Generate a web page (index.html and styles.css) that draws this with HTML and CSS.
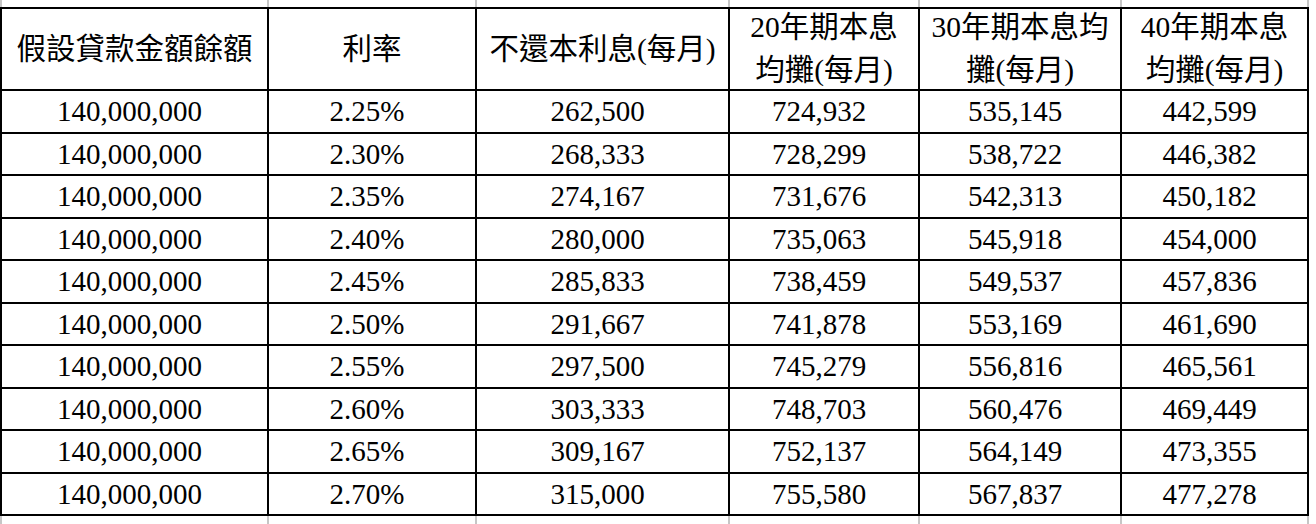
FILE: index.html
```html
<!DOCTYPE html>
<html lang="zh-Hant">
<head>
<meta charset="utf-8">
<title>房貸試算</title>
<link rel="stylesheet" href="styles.css">
</head>
<body>
<div class="sheet">
  <div class="strip strip-top">
    <span></span><span></span><span></span><span></span><span></span><span></span>
  </div>
  <div class="loan-table" role="table">
    <div class="th" role="columnheader">假設貸款金額餘額</div>
    <div class="th" role="columnheader">利率</div>
    <div class="th" role="columnheader">不還本利息(每月)</div>
    <div class="th" role="columnheader">20年期本息<br>均攤(每月)</div>
    <div class="th" role="columnheader">30年期本息均<br>攤(每月)</div>
    <div class="th" role="columnheader">40年期本息<br>均攤(每月)</div>

    <div class="td">140,000,000</div><div class="td">2.25%</div><div class="td">262,500</div><div class="td">724,932</div><div class="td">535,145</div><div class="td">442,599</div>
    <div class="td">140,000,000</div><div class="td">2.30%</div><div class="td">268,333</div><div class="td">728,299</div><div class="td">538,722</div><div class="td">446,382</div>
    <div class="td">140,000,000</div><div class="td">2.35%</div><div class="td">274,167</div><div class="td">731,676</div><div class="td">542,313</div><div class="td">450,182</div>
    <div class="td">140,000,000</div><div class="td">2.40%</div><div class="td">280,000</div><div class="td">735,063</div><div class="td">545,918</div><div class="td">454,000</div>
    <div class="td">140,000,000</div><div class="td">2.45%</div><div class="td">285,833</div><div class="td">738,459</div><div class="td">549,537</div><div class="td">457,836</div>
    <div class="td">140,000,000</div><div class="td">2.50%</div><div class="td">291,667</div><div class="td">741,878</div><div class="td">553,169</div><div class="td">461,690</div>
    <div class="td">140,000,000</div><div class="td">2.55%</div><div class="td">297,500</div><div class="td">745,279</div><div class="td">556,816</div><div class="td">465,561</div>
    <div class="td">140,000,000</div><div class="td">2.60%</div><div class="td">303,333</div><div class="td">748,703</div><div class="td">560,476</div><div class="td">469,449</div>
    <div class="td">140,000,000</div><div class="td">2.65%</div><div class="td">309,167</div><div class="td">752,137</div><div class="td">564,149</div><div class="td">473,355</div>
    <div class="td">140,000,000</div><div class="td">2.70%</div><div class="td">315,000</div><div class="td">755,580</div><div class="td">567,837</div><div class="td">477,278</div>
  </div>
  <div class="strip strip-bottom">
    <span></span><span></span><span></span><span></span><span></span><span></span>
  </div>
</div>
</body>
</html>
```

FILE: styles.css
```css
html, body {
  margin: 0;
  padding: 0;
  background: #ffffff;
}

body {
  width: 1316px;
  height: 524px;
  overflow: hidden;
  font-family: "Liberation Serif", "Noto Sans CJK TC", serif;
  color: #000000;
}

.sheet {
  display: flex;
  flex-direction: column;
  align-items: flex-start;
}

.strip,
.loan-table {
  display: grid;
  grid-template-columns: 265px 206px 251px 188px 200px 185px;
  column-gap: 2px;
  width: max-content;
}

.strip {
  background: #c6c6c6;
  padding: 0 2px;
}

.strip span {
  background: #ffffff;
}

.strip-top {
  height: 7px;
}

.strip-bottom {
  height: 8px;
}

.loan-table {
  background: #000000;
  padding: 2px;
  row-gap: 2px;
  grid-template-rows: 80px repeat(5, 41px 40px);
}

.th,
.td {
  background: #ffffff;
  display: flex;
  align-items: center;
  justify-content: center;
  text-align: center;
  white-space: nowrap;
}

.th {
  font-size: 29.5px;
  line-height: 43px;
}

.td {
  font-size: 29px;
  line-height: 33px;
  padding-right: 10px;
}
```
